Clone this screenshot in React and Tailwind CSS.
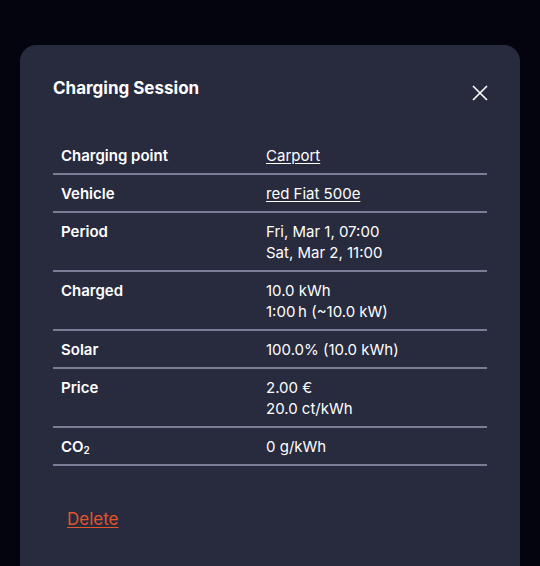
import React from "react";

const ROWS = [
  { label: "Charging point", values: ["Carport"], link: true },
  { label: "Vehicle", values: ["red Fiat 500e"], link: true },
  { label: "Period", values: ["Fri, Mar 1, 07:00", "Sat, Mar 2, 11:00"] },
  { label: "Charged", values: ["10.0 kWh", "1:00\u2009h (~10.0 kW)"] },
  { label: "Solar", values: ["100.0% (10.0 kWh)"] },
  { label: "Price", values: ["2.00 €", "20.0 ct/kWh"] },
  { label: <>CO<sub className="text-[10px] align-baseline relative top-[2px]">2</sub></>, values: ["0 g/kWh"] },
];

export default function App() {
  return (
    <div
      className="w-[540px] h-[566px] overflow-hidden bg-[#04040e] pt-[45px] px-[20px]"
      style={{ fontFamily: "Inter, 'Open Sans', sans-serif" }}
    >
      <div className="w-[500px] h-[560px] rounded-[16px] bg-[#282a3e] px-[33px] pt-[32px]">
        <div className="flex items-start justify-between">
          <h2 className="text-[17px] leading-[22px] font-bold text-white">Charging Session</h2>
          <button className="mt-[8px] mr-[-1px] text-white">
            <svg width="16" height="16" viewBox="0 0 16 16" fill="none" stroke="currentColor" strokeWidth="1.6">
              <path d="M1 1L15 15M15 1L1 15" />
            </svg>
          </button>
        </div>

        <table className="w-[434px] mt-[36px] text-[15px] leading-[21px] text-white border-collapse">
          <tbody>
            {ROWS.map((row, i) => (
              <tr key={i} className="border-b-2 border-[#7b7d97]">
                <td className="w-[205px] px-2 pt-2 pb-[7px] align-top font-semibold">{row.label}</td>
                <td className="px-2 pt-2 pb-[7px] align-top">
                  {row.values.map((v, j) => (
                    <div key={j} className={row.link ? "underline underline-offset-2" : ""}>
                      {v}
                    </div>
                  ))}
                </td>
              </tr>
            ))}
          </tbody>
        </table>

        <button className="mt-[41px] ml-[14px] text-[17px] text-[#e2562a] underline underline-offset-2">
          Delete
        </button>
      </div>
    </div>
  );
}
